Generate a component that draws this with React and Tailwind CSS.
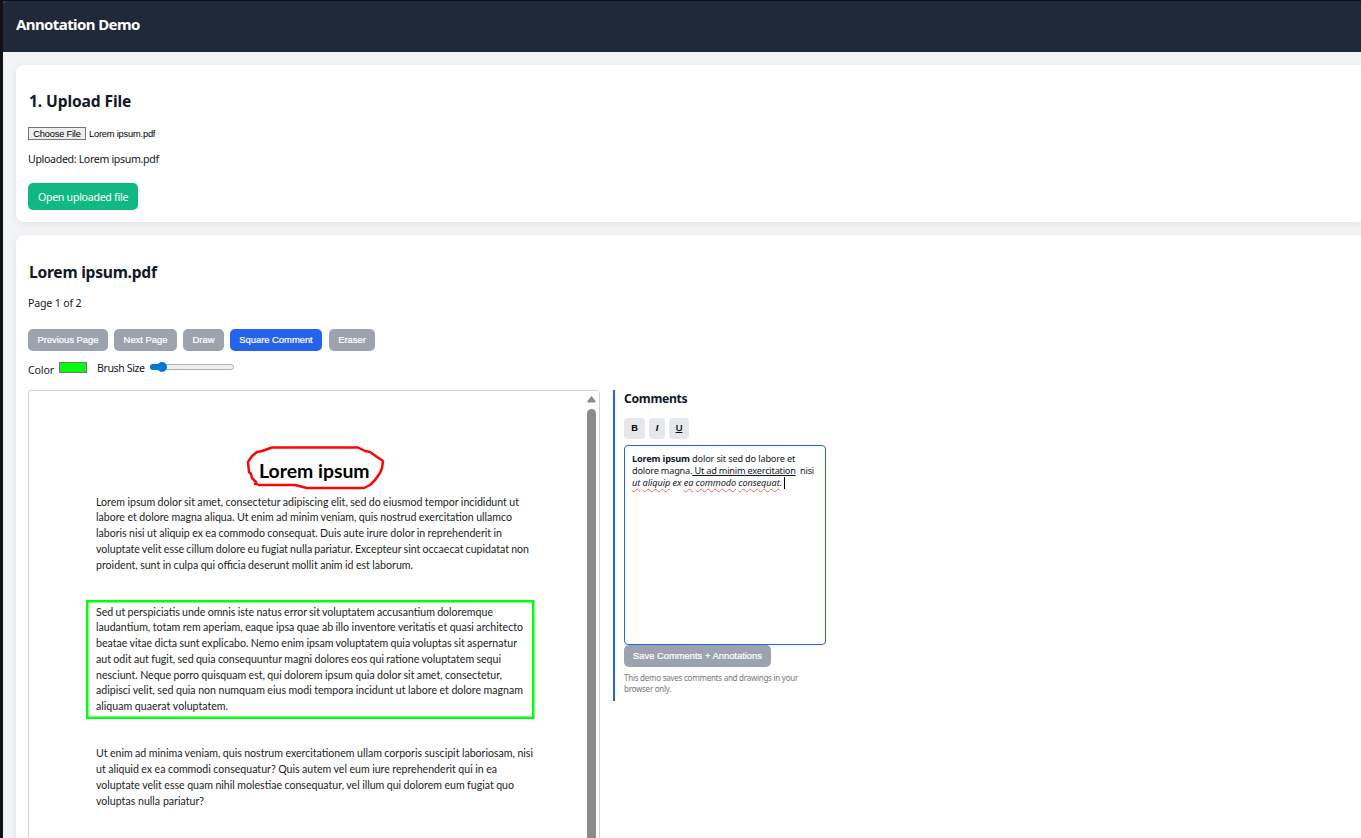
import React, { useState } from 'react';

const paragraphs = [
  {
    lines: [
      ['Lorem ipsum dolor sit amet, consectetur adipiscing elit, sed do eiusmod tempor incididunt ut', 423],
      ['labore et dolore magna aliqua. Ut enim ad minim veniam, quis nostrud exercitation ullamco', 416],
      ['laboris nisi ut aliquip ex ea commodo consequat. Duis aute irure dolor in reprehenderit in', 406],
      ['voluptate velit esse cillum dolore eu fugiat nulla pariatur. Excepteur sint occaecat cupidatat non', 433],
      ['proident, sunt in culpa qui officia deserunt mollit anim id est laborum.', 317],
    ],
  },
  {
    lines: [
      ['Sed ut perspiciatis unde omnis iste natus error sit voluptatem accusantium doloremque', 397],
      ['laudantium, totam rem aperiam, eaque ipsa quae ab illo inventore veritatis et quasi architecto', 427],
      ['beatae vitae dicta sunt explicabo. Nemo enim ipsam voluptatem quia voluptas sit aspernatur', 421],
      ['aut odit aut fugit, sed quia consequuntur magni dolores eos qui ratione voluptatem sequi', 405],
      ['nesciunt. Neque porro quisquam est, qui dolorem ipsum quia dolor sit amet, consectetur,', 406],
      ['adipisci velit, sed quia non numquam eius modi tempora incidunt ut labore et dolore magnam', 427],
      ['aliquam quaerat voluptatem.', 132],
    ],
  },
  {
    lines: [
      ['Ut enim ad minima veniam, quis nostrum exercitationem ullam corporis suscipit laboriosam, nisi', 437],
      ['ut aliquid ex ea commodi consequatur? Quis autem vel eum iure reprehenderit qui in ea', 401],
      ['voluptate velit esse quam nihil molestiae consequatur, vel illum qui dolorem eum fugiat quo', 418],
      ['voluptas nulla pariatur?', 108],
    ],
  },
];

const Paragraph = ({ lines }) => (
  <div className="mb-[31.3px]">
    {lines.map(([text, width]) => (
      <div
        key={text}
        className="h-[15.75px] [word-spacing:-1px] whitespace-nowrap [text-align-last:justify]"
        style={{ width }}
      >
        {text}
      </div>
    ))}
  </div>
);

const ToolButton = ({ active, onClick, className, children }) => (
  <button
    onClick={onClick}
    className={`h-[22px] shrink-0 rounded-[5px] font-['Liberation_Sans',sans-serif] text-[9.4px] font-medium whitespace-nowrap text-white [-webkit-text-stroke:0.2px_white] ${
      active ? 'bg-[#2563eb]' : 'bg-[#9ca3af]'
    } ${className}`}
  >
    {children}
  </button>
);

const Misspelled = ({ children }) => (
  <span className="underline decoration-[#ff5c5c] decoration-wavy decoration-[0.7px] underline-offset-[2px]">
    {children}
  </span>
);

const UploadCard = () => (
  <section className="h-[157px] rounded-l-lg bg-white pt-[26px] pl-3 shadow-[0_2px_8px_rgba(0,0,0,0.08)]">
    <h2 className="-mt-px h-[22px] pl-px text-[15.6px] leading-[22px] font-bold tracking-[-0.12px]">
      1. Upload File
    </h2>
    <div className="mt-[15px] flex h-[13px] items-center font-['Liberation_Sans',sans-serif] text-[9.3px] tracking-[-0.2px] text-black">
      <button className="h-[13px] w-[58px] border border-[#767676] bg-[#efefef] leading-[12px] whitespace-nowrap">
        Choose File
      </button>
      <span className="ml-[3px] pt-[2px]">Lorem ipsum.pdf</span>
    </div>
    <p className="mt-3 h-[14px] text-[10.6px] leading-[14px] tracking-[-0.33px]">Uploaded: Lorem ipsum.pdf</p>
    <button className="mt-[17px] h-[27px] w-[110px] rounded-[5px] bg-[#10b981] pt-[2px] text-[10.6px] tracking-[-0.27px] whitespace-nowrap text-white">
      Open uploaded file
    </button>
  </section>
);

const PdfViewer = () => (
  <div className="flex h-[600px] w-[572px] shrink-0 justify-between rounded-[3px] border border-[#cbd5e1]">
    <div className="relative pl-[67px] font-['Lato',sans-serif] text-[10.6px] leading-[15.75px] text-[#222]">
      <h1 className="mt-[67px] h-[36.7px] pl-[163px] text-[19.4px] leading-[26px] font-bold text-black">
        Lorem ipsum
      </h1>
      {paragraphs.map((paragraph) => (
        <Paragraph key={paragraph.lines[0][0]} lines={paragraph.lines} />
      ))}

      {/* Annotation layer */}
      <svg className="absolute top-0 left-0" width="556" height="448" viewBox="29 391 556 448" fill="none">
        <path
          d="M258 484 L255 484 L256 482 L252 478 L251 474 L249 472 L248 462 L252 456 L257 452 L262 451 L272 447.500 L358 447.500 L365 451 L370 452 L377 457 L383 461 L382 468 L380 473 L375 480 L370 485 L364 488 L307 488 L295 485 L258 485"
          stroke="#f90606"
          strokeWidth="2.5"
          strokeLinejoin="round"
        />
        <rect x="87.250" y="601.250" width="446" height="116.500" stroke="#00ff0d" strokeWidth="2.500" />
      </svg>
    </div>
    <div className="flex w-[14px] flex-col items-end bg-[#fcfcfc] pt-1 pr-[3px]">
      <svg className="shrink-0" width="9" height="8" viewBox="0.500 0 9 8">
        <path d="M5 1 L9 6 Q9.500 7.500 8 7.500 H2 Q0.500 7.500 1 6 Z" fill="#8b8b8b" />
      </svg>
      <div className="mt-[6px] w-[9px] grow rounded-t-[5px] bg-[#8b8b8b]" />
    </div>
  </div>
);

const CommentsPanel = () => (
  <aside className="ml-[13px] h-[311px] w-[215px] border-l-2 border-[#2563eb] pl-[9px]">
    <h3 className="h-[18px] text-[12.2px] leading-[18px] font-bold tracking-[-0.3px]">Comments</h3>
    <div className="mt-[10px] flex gap-1 font-['Liberation_Sans',sans-serif] text-[9.3px] leading-[21px] text-black">
      <button className="h-[21px] w-[21px] rounded-[4px] bg-[#e5e7eb] font-bold">B</button>
      <button className="h-[21px] w-4 rounded-[4px] bg-[#e5e7eb] font-bold italic">I</button>
      <button className="h-[21px] w-5 rounded-[4px] bg-[#e5e7eb] underline [-webkit-text-stroke:0.25px_black]">
        U
      </button>
    </div>
    <div className="mt-[6px] h-[200px] w-[202px] rounded-[4px] border border-[#2563eb] pt-[7px] pl-[7px] text-[9.2px] leading-[12px] whitespace-nowrap">
      <div className="tracking-[-0.17px]">
        <b>Lorem ipsum</b> dolor sit sed do labore et
      </div>
      <div className="tracking-[-0.21px]">
        dolore magna.<u className="underline-offset-[1px]"> Ut ad minim exercitation</u>&nbsp; nisi
      </div>
      <div className="flex tracking-[-0.09px] italic">
        <span>
          <Misspelled>ut</Misspelled> <Misspelled>aliquip</Misspelled> ex <Misspelled>ea</Misspelled>{' '}
          <Misspelled>commodo</Misspelled> <Misspelled>consequat</Misspelled>.
        </span>
        <span className="ml-[2px] h-3 w-px bg-black" />
      </div>
    </div>
    <ToolButton className="block w-[147px]">Save Comments + Annotations</ToolButton>
    <p className="mt-[5px] text-[8px] leading-[11px] tracking-[-0.25px] whitespace-nowrap text-[#777]">
      This demo saves comments and drawings in your
      <br />
      browser only.
    </p>
  </aside>
);

const App = () => {
  const [tool, setTool] = useState('square');

  return (
    <div className="h-[838px] overflow-hidden bg-[#111] pt-px pl-[3px] font-['Noto_Sans',sans-serif] text-[#111827]">
      <div className="h-full rounded-tl-[3px] bg-[#f3f4f6]">
        <header className="h-[51px] rounded-tl-[3px] bg-[#1f2937] pt-3 pl-[13px] text-white">
          <h1 className="text-[15px] leading-[22px] font-bold tracking-[-0.6px]">Annotation Demo</h1>
        </header>

        <main className="pt-[13px] pl-[13px]">
          <UploadCard />

          <section className="mt-[13px] h-[700px] rounded-l-lg bg-white pt-[26px] pl-3 shadow-[0_2px_8px_rgba(0,0,0,0.08)]">
            <h2 className="h-[22px] pl-px text-[15.6px] leading-[22px] font-bold tracking-[-0.25px]">
              Lorem ipsum.pdf
            </h2>
            <p className="mt-[13px] h-[14px] text-[10.6px] leading-[14px] tracking-[-0.18px]">Page 1 of 2</p>

            <div className="mt-[19px] flex">
              <ToolButton className="mr-[6px] w-20">Previous Page</ToolButton>
              <ToolButton className="mr-[6px] w-[63px]">Next Page</ToolButton>
              <ToolButton active={tool === 'draw'} onClick={() => setTool('draw')} className="mr-[6px] w-[41px]">
                Draw
              </ToolButton>
              <ToolButton active={tool === 'square'} onClick={() => setTool('square')} className="mr-[7px] w-[92px]">
                Square Comment
              </ToolButton>
              <ToolButton active={tool === 'eraser'} onClick={() => setTool('eraser')} className="w-[46px]">
                Eraser
              </ToolButton>
            </div>

            <div className="mt-[9px] flex h-[30px] text-[10.6px] leading-[14px] whitespace-nowrap">
              <span className="w-[31px] pt-[3px] tracking-[-0.15px]">Color</span>
              <span className="mt-[2px] h-[11px] w-7 border border-[#767676] bg-[#00ff0d]" />
              <span className="ml-[10px] w-[53px] pt-px tracking-[-0.4px]">Brush Size</span>
              {/* Brush slider */}
              <div className="mt-1 flex h-[6px] w-[84px] items-center rounded-full border border-[#b2b2b2] bg-[#efefef]">
                <div className="-ml-px h-[6px] w-[8px] rounded-l-full bg-[#0078d4]" />
                <div className="-ml-px h-[10px] w-[10px] shrink-0 rounded-full bg-[#0078d4]" />
              </div>
            </div>

            <div className="flex">
              <PdfViewer />
              <CommentsPanel />
            </div>
          </section>
        </main>
      </div>
    </div>
  );
};

export default App;
